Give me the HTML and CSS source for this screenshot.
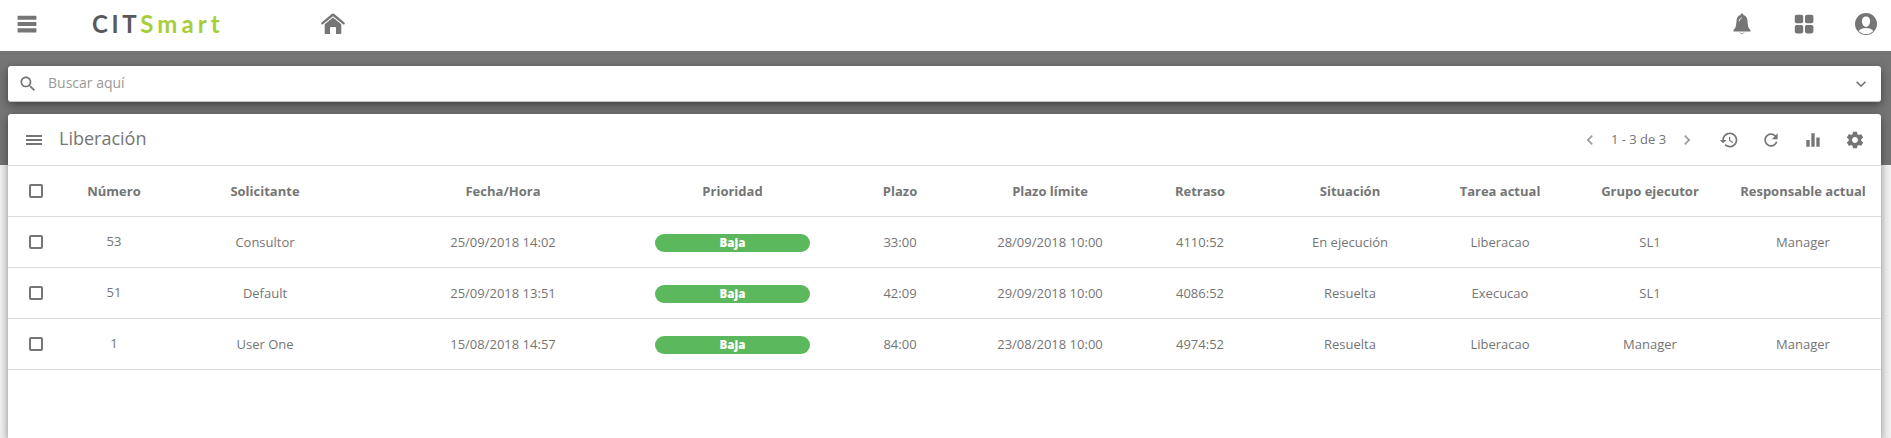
FILE: index.html
```html
<!DOCTYPE html>
<html lang="es">
<head>
<meta charset="utf-8">
<title>CITSmart - Liberación</title>
<link rel="stylesheet" href="styles.css">
</head>
<body>
<header class="topbar">
  <svg class="icon-nav" viewBox="0 0 20 18"><path d="M.6 .7h18.8v4.1H.6zM.6 7h18.8v4.1H.6zM.6 13.2h18.8v4.2H.6z"/></svg>
  <div class="logo"><span class="logo-cit">CIT</span><span class="logo-smart">Smart</span></div>
  <svg class="icon-home" viewBox="0 0 24 22"><path d="M12 .4c.5 0 .9.200 1.300.5l10.100 8.700c1 .9-.2 2.500-1.300 1.700L12 3.200 1.900 11.300C.8 12.100-.4 10.500.6 9.600L10.700.9c.4-.3.8-.5 1.300-.5z"/><path d="M12 4.500 20.300 11.200v8.700c0 .7-.5 1.100-1.100 1.100h-4.200v-6.200c0-.6-.3-.9-.8-.9H9.800c-.5 0-.8.3-.8.9V21H4.800c-.6 0-1.100-.4-1.100-1.100v-8.700z"/></svg>
  <nav class="top-actions">
    <svg class="icon-bell" viewBox="0 0 18 22"><path d="M9 .5c.9 0 1.500.6 1.400 1.500 2.600.6 4 2.800 4.100 5.600.2 5.400 1 7.800 3 9.400v1.500H.5V17c2-1.600 2.800-4 3-9.400C3.600 4.800 5 2.600 7.600 2 7.500 1.100 8.100.5 9 .5z"/><path class="bell-light" d="M6.200 8.300C6.400 6.400 7.200 5.300 8.800 4.900"/><path class="bell-clapper" d="M7 19.300c.2 1.900 3.800 1.900 4 0"/></svg>
    <svg class="icon-apps" viewBox="0 0 20 20"><rect x=".8" y=".8" width="8.400" height="8.400" rx="1.800"/><rect x="11" y=".8" width="8.400" height="8.400" rx="1.800"/><rect x=".8" y="11" width="8.400" height="8.400" rx="1.800"/><rect x="11" y="11" width="8.400" height="8.400" rx="1.800"/></svg>
    <svg class="icon-user" viewBox="0 0 22 22"><circle cx="11" cy="11" r="11"/><path class="user-face" d="M11 3.600c2.600 0 4.100 1.900 4.100 4.600 0 2.900-1.700 5.600-4.100 5.600S6.900 11.100 6.900 8.200c0-2.700 1.500-4.600 4.100-4.600z"/><path class="user-face" d="M3.600 18c1.300-2 4.100-3 7.400-3s6.100 1 7.400 3c-1.800 2-4.400 3.100-7.400 3.100S5.400 20 3.600 18z"/></svg>
  </nav>
</header>
<main class="content">
  <div class="search">
    <svg class="icon" viewBox="0 0 24 24"><path d="M15.500 14h-.79l-.28-.27C15.410 12.590 16 11.110 16 9.500 16 5.910 13.090 3 9.500 3S3 5.910 3 9.500 5.910 16 9.500 16c1.610 0 3.090-.59 4.230-1.570l.27.28v.79l5 4.990L20.490 19l-4.990-5zm-6 0C7.010 14 5 11.990 5 9.500S7.010 5 9.500 5 14 7.010 14 9.500 11.990 14 9.500 14z"/></svg>
    <span class="search-hint">Buscar aquí</span>
    <svg class="icon" viewBox="0 0 24 24"><path d="M16.590 8.590 12 13.170 7.410 8.590 6 10l6 6 6-6z"/></svg>
  </div>
  <section class="card">
    <div class="card-head">
      <svg class="icon-menu" viewBox="0 0 16 10"><path d="M0 0h16v2H0zM0 4h16v2H0zM0 8h16v2H0z"/></svg>
      <h1 class="card-title">Liberación</h1>
      <div class="pager">
        <svg class="icon faint" viewBox="0 0 24 24"><path d="M15.410 7.410 14 6l-6 6 6 6 1.410-1.410L10.830 12z"/></svg>
        <span class="pager-text">1 - 3 de 3</span>
        <svg class="icon faint" viewBox="0 0 24 24"><path d="M10 6 8.590 7.410 13.170 12l-4.580 4.590L10 18l6-6z"/></svg>
      </div>
      <div class="tools">
        <svg class="icon" viewBox="0 0 24 24"><path d="M13 3c-4.970 0-9 4.030-9 9H1l3.890 3.890.07.14L9 12H6c0-3.870 3.130-7 7-7s7 3.130 7 7-3.130 7-7 7c-1.930 0-3.680-.79-4.940-2.060l-1.420 1.420C8.270 19.990 10.510 21 13 21c4.970 0 9-4.030 9-9s-4.030-9-9-9zm-1 5v5l4.280 2.540.72-1.210-3.500-2.080V8H12z"/></svg>
        <svg class="icon" viewBox="0 0 24 24"><path d="M17.650 6.350C16.200 4.900 14.210 4 12 4c-4.420 0-7.990 3.580-7.990 8s3.570 8 7.990 8c3.730 0 6.840-2.550 7.730-6h-2.080c-.82 2.330-3.040 4-5.650 4-3.310 0-6-2.690-6-6s2.690-6 6-6c1.660 0 3.140.69 4.220 1.780L13 11h7V4l-2.350 2.350z"/></svg>
        <svg class="icon" viewBox="0 0 24 24"><path d="M10 20h4V4h-4v16zm-6 0h4v-8H4v8zM16 9v11h4V9h-4z"/></svg>
        <svg class="icon" viewBox="0 0 24 24"><path d="M19.430 12.980c.04-.32.07-.64.07-.98s-.03-.66-.07-.98l2.110-1.650c.19-.15.24-.42.12-.64l-2-3.460c-.12-.22-.39-.3-.61-.22l-2.490 1c-.52-.4-1.080-.73-1.690-.98l-.38-2.650C14.460 2.180 14.250 2 14 2h-4c-.25 0-.46.18-.49.42l-.38 2.650c-.61.25-1.170.59-1.690.98l-2.490-1c-.23-.09-.49 0-.61.22l-2 3.460c-.13.22-.07.49.12.64l2.110 1.650c-.04.32-.07.65-.07.98s.03.66.07.98l-2.110 1.650c-.19.15-.24.42-.12.64l2 3.460c.12.22.39.3.61.22l2.490-1c.52.4 1.080.73 1.690.98l.38 2.650c.03.24.24.42.49.42h4c.25 0 .46-.18.49-.42l.38-2.650c.61-.25 1.170-.59 1.690-.98l2.490 1c.23.09.49 0 .61-.22l2-3.460c.12-.22.07-.49-.12-.64l-2.110-1.650zM12 15.500c-1.930 0-3.500-1.570-3.500-3.500s1.570-3.500 3.500-3.500 3.500 1.570 3.500 3.500-1.570 3.500-3.500 3.500z"/></svg>
      </div>
    </div>
    <table class="grid">
      <colgroup><col class="c-check"><col class="c-num"><col class="c-req"><col class="c-date"><col class="c-prio"><col class="c-std"><col class="c-std"><col class="c-std"><col class="c-std"><col class="c-std"><col class="c-std"><col class="c-resp"></colgroup>
      <thead>
        <tr><th><span class="check"></span></th><th>Número</th><th>Solicitante</th><th>Fecha/Hora</th><th>Prioridad</th><th>Plazo</th><th>Plazo límite</th><th>Retraso</th><th>Situación</th><th>Tarea actual</th><th>Grupo ejecutor</th><th>Responsable actual</th></tr>
      </thead>
      <tbody>
        <tr><td><span class="check"></span></td><td class="num">53</td><td>Consultor</td><td>25/09/2018 14:02</td><td class="prio"><span class="pill">Baja</span></td><td>33:00</td><td>28/09/2018 10:00</td><td>4110:52</td><td>En ejecución</td><td>Liberacao</td><td>SL1</td><td>Manager</td></tr>
        <tr><td><span class="check"></span></td><td class="num">51</td><td>Default</td><td>25/09/2018 13:51</td><td class="prio"><span class="pill">Baja</span></td><td>42:09</td><td>29/09/2018 10:00</td><td>4086:52</td><td>Resuelta</td><td>Execucao</td><td>SL1</td><td></td></tr>
        <tr><td><span class="check"></span></td><td class="num">1</td><td>User One</td><td>15/08/2018 14:57</td><td class="prio"><span class="pill">Baja</span></td><td>84:00</td><td>23/08/2018 10:00</td><td>4974:52</td><td>Resuelta</td><td>Liberacao</td><td>Manager</td><td>Manager</td></tr>
      </tbody>
    </table>
  </section>
</main>
</body>
</html>
```

FILE: styles.css
```css
* { box-sizing: border-box; }
body {
  margin: 0;
  height: 438px;
  overflow: hidden;
  display: flex;
  flex-direction: column;
  background: #f2f2f2;
  color: #757575;
  font: 13px/18px "Open Sans", "Noto Sans", sans-serif;
}
svg { display: block; flex: none; fill: #757575; }
.topbar {
  flex: none;
  display: flex;
  align-items: center;
  height: 51px;
  padding: 0 14px 3px 17px;
  background: #fff;
}
.icon-nav { width: 20px; height: 18px; }
.logo {
  width: 229px;
  margin-left: 55px;
  font: 700 24px/30px Lato, "Open Sans", sans-serif;
  white-space: nowrap;
}
.logo-cit { color: #58595b; letter-spacing: 3.6px; }
.logo-smart { color: #a6ce39; letter-spacing: 4.1px; }
.icon-home { width: 24px; height: 22px; }
.top-actions { display: flex; align-items: center; margin-left: auto; }
.icon-bell { width: 18px; height: 22px; margin-right: 43px; }
.bell-light { fill: none; stroke: #fff; stroke-width: .9; }
.bell-clapper { fill: none; stroke: #999; stroke-width: .9; }
.icon-apps { width: 20px; height: 20px; margin-right: 41px; }
.icon-user { width: 22px; height: 22px; }
.user-face { fill: #fff; }
.content {
  flex: 1;
  min-height: 0;
  display: flex;
  flex-direction: column;
  gap: 12px;
  padding: 15px 10px 0 8px;
  background: linear-gradient(#757575 114px, #f2f2f2 114px);
}
.search, .card {
  background: #fff;
  box-shadow: 0 3px 10px rgba(0, 0, 0, .45);
}
.search {
  flex: none;
  display: flex;
  align-items: center;
  height: 36px;
  padding: 0 10px;
  border-radius: 3px;
  border-bottom: 1px solid #c4c4c4;
}
.icon { width: 20px; height: 20px; }
.faint { fill: #9a9a9a; }
.search-hint { flex: 1; margin-left: 10px; padding-bottom: 1px; font-size: 14px; color: #999; }
.card { flex: 1; min-height: 0; border-radius: 3px 3px 0 0; }
.card-head {
  display: flex;
  align-items: center;
  height: 52px;
  padding: 0 16px 0 18px;
  border-bottom: 1px solid #dcdcdc;
}
.icon-menu { width: 16px; height: 10px; }
.card-title { margin: 0 auto 3px 17px; font-size: 18px; font-weight: 400; line-height: 24px; }
.pager { display: flex; align-items: center; margin-right: 22px; }
.pager-text { width: 77px; padding-bottom: 1px; text-align: center; }
.tools { display: flex; gap: 22px; }
.grid { width: 1873px; table-layout: fixed; border-collapse: separate; border-spacing: 0; }
.c-check { width: 56px; }
.c-num { width: 100px; }
.c-req { width: 202px; }
.c-date { width: 274px; }
.c-prio { width: 185px; }
.c-std { width: 150px; }
.c-resp { width: 156px; }
.grid th, .grid td {
  height: 51px;
  padding: 0;
  border-bottom: 1px solid #dcdcdc;
  text-align: center;
  vertical-align: middle;
  white-space: nowrap;
}
.grid th { font-weight: 700; }
.grid .num { padding-bottom: 2px; }
.grid .prio { padding-top: 2px; }
.check {
  display: block;
  width: 14px;
  height: 14px;
  margin: 0 auto;
  border: 2px solid #757575;
  border-radius: 2px;
}
.pill {
  display: block;
  width: 155px;
  height: 18px;
  margin: 0 auto;
  border-radius: 9px;
  background: #5cb85c;
  color: #fff;
  font-size: 11.500px;
  font-weight: 800;
}
```
